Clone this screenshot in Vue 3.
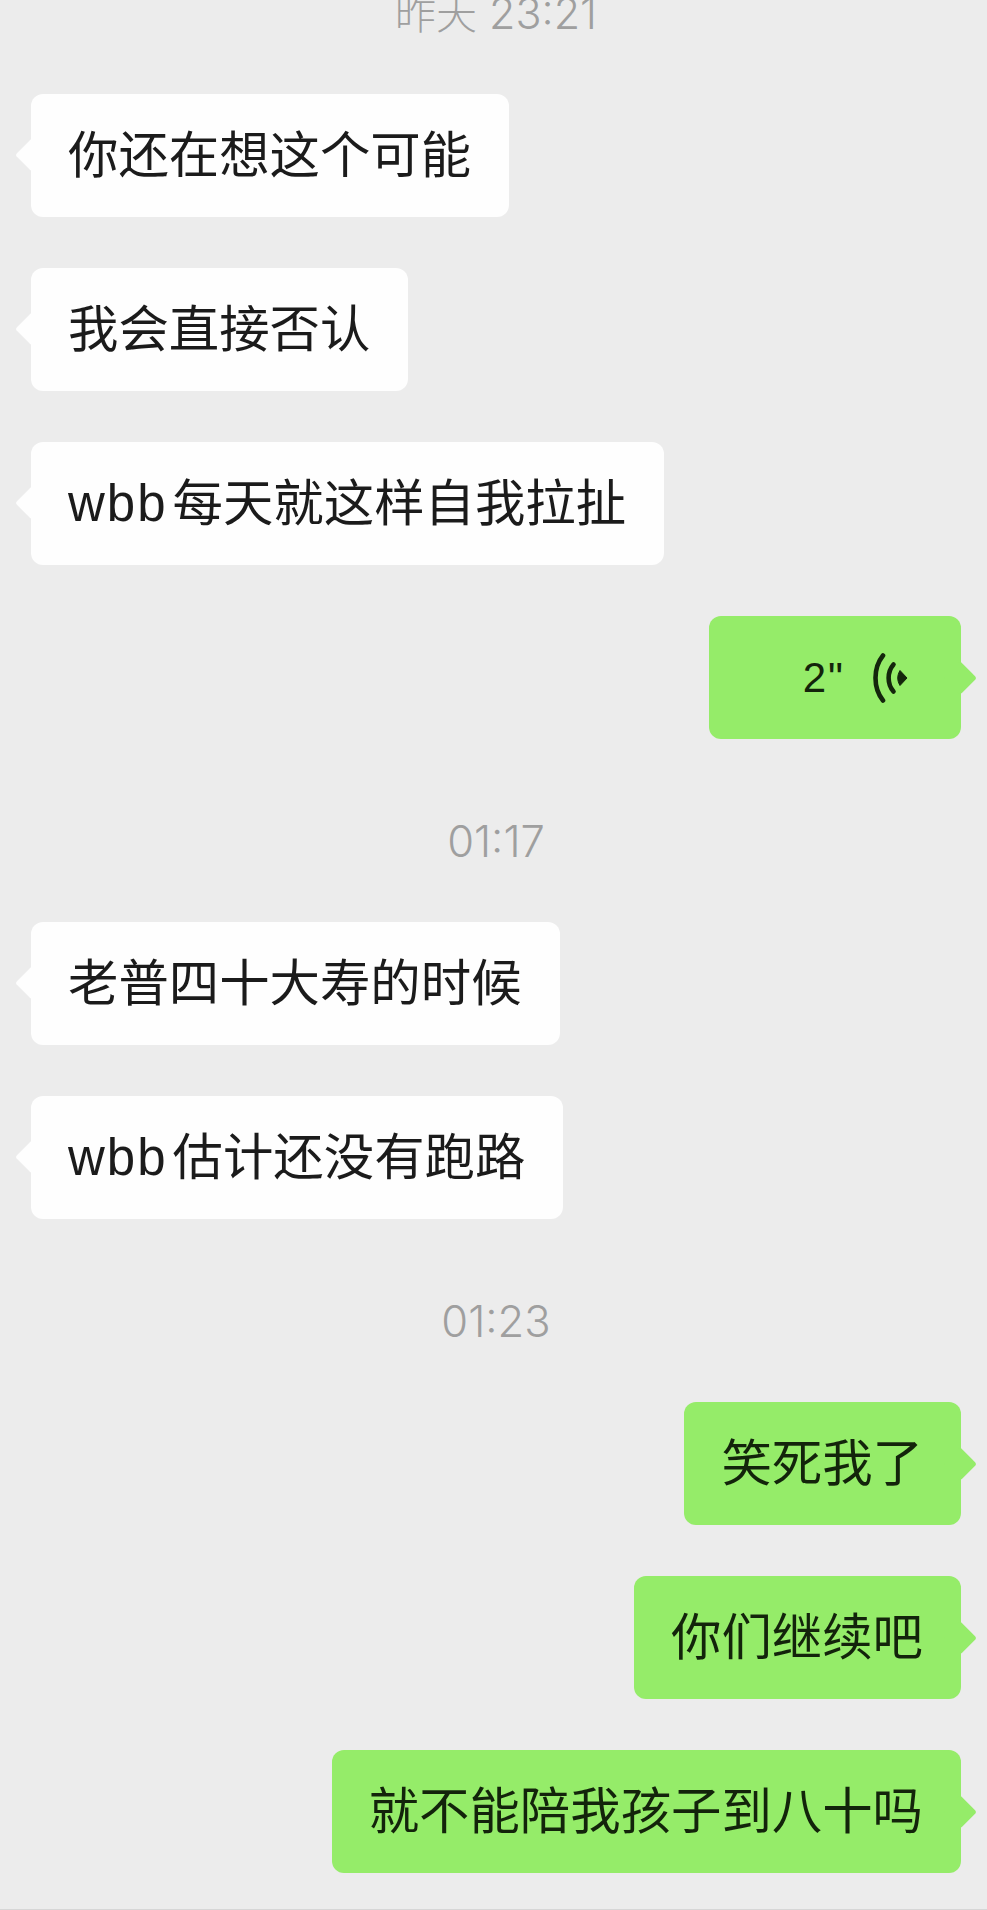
<template>
  <div class="chat">
    <template v-for="(item, i) in items" :key="i">
      <div v-if="item.type === 'time'" class="time" :class="{ first: i === 0 }">
        <span v-if="item.day" class="day">{{ item.day }}</span>{{ item.text }}
      </div>
      <div v-else class="row" :class="item.type">
        <div class="bubble" :class="{ voice: item.voice }">
          <template v-if="item.voice">
            <span class="secs">{{ item.text }}</span>
            <svg class="wave" width="36" height="50" viewBox="0 0 36 50">
              <path d="M11 2.5 C1 15 1 35 11 47.5" fill="none" stroke="#14260c" stroke-width="4.6" stroke-linecap="round" />
              <path d="M21.5 11.5 C15 19 15 31 21.5 38.5" fill="none" stroke="#14260c" stroke-width="4.6" stroke-linecap="round" />
              <path d="M28 17.5 L35 25 L28 32.5 C25 27.5 25 22.5 28 17.5 Z" fill="#14260c" stroke="#14260c" stroke-width="1" stroke-linejoin="round" />
            </svg>
          </template>
          <span v-else><span v-if="item.latin" class="latin">{{ item.latin }}</span>{{ item.text }}</span>
        </div>
      </div>
    </template>
    <div class="edge"></div>
  </div>
</template>

<script setup>
const items = [
  { type: 'time', day: '昨天', text: ' 23:21' },
  { type: 'left', text: '你还在想这个可能' },
  { type: 'left', text: '我会直接否认' },
  { type: 'left', latin: 'wbb', text: '每天就这样自我拉扯' },
  { type: 'right', text: '2"', voice: true },
  { type: 'time', text: '01:17' },
  { type: 'left', text: '老普四十大寿的时候' },
  { type: 'left', latin: 'wbb', text: '估计还没有跑路' },
  { type: 'time', text: '01:23' },
  { type: 'right', text: '笑死我了' },
  { type: 'right', text: '你们继续吧' },
  { type: 'right', text: '就不能陪我孩子到八十吗' }
]
</script>

<style>
html,
body {
  margin: 0;
  background: #ececec;
}
</style>

<style scoped>
.chat {
  position: relative;
  width: 987px;
  height: 1910px;
  overflow: hidden;
  background: #ececec;
  display: flex;
  flex-direction: column;
  font-family: "Liberation Sans", "Noto Sans CJK SC", sans-serif;
}

.time {
  height: 50px;
  line-height: 50px;
  margin: 77px 0 56px;
  padding-left: 5px;
  text-align: center;
  white-space: pre;
  font-family: Inter, "Noto Sans CJK SC", sans-serif;
  font-weight: 300;
  font-size: 43.5px;
  color: #9f9f9f;
}

.time.first {
  margin-top: -12px;
  font-size: 43px;
}

.day {
  font-size: 41px;
}

.row {
  display: flex;
  padding: 0 26px 0 31px;
}

.row + .row {
  margin-top: 51px;
}

.row.right {
  justify-content: flex-end;
}

.bubble {
  position: relative;
  display: flex;
  align-items: center;
  box-sizing: border-box;
  height: 123px;
  padding: 0 38px 8px 37px;
  border-radius: 12px;
  background: #fefefe;
  font-size: 50.4px;
  color: #1b1b1b;
  white-space: nowrap;
}

.right .bubble {
  background: #95ec69;
  color: #13240b;
}

.bubble::before {
  content: "";
  position: absolute;
  top: 50%;
  left: -11px;
  width: 24px;
  height: 24px;
  margin-top: -13px;
  border-radius: 3px;
  background: inherit;
  transform: rotate(45deg);
}

.right .bubble::before {
  left: auto;
  right: -11px;
  margin-top: -12px;
}

.latin {
  font-size: 51px;
  letter-spacing: 2px;
  margin-right: 5px;
}

.bubble.voice {
  width: 252px;
  justify-content: flex-end;
  padding: 0 53px 0 0;
}

.secs {
  font-size: 42px;
  letter-spacing: 2px;
  margin-right: 27px;
}

.wave {
  flex: none;
}

.edge {
  position: absolute;
  left: 0;
  right: 0;
  bottom: 0;
  height: 1px;
  background: #d6d6d6;
}
</style>
